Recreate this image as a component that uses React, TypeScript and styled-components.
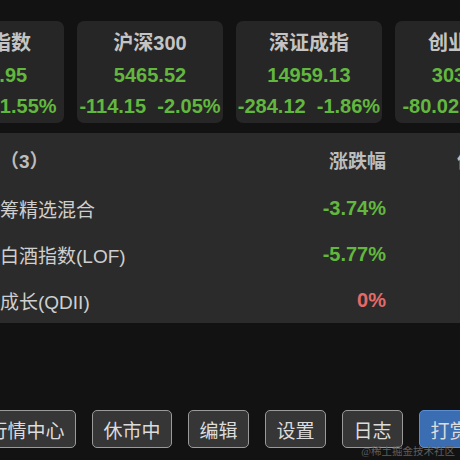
import styled, { createGlobalStyle } from 'styled-components'

const GlobalStyle = createGlobalStyle`
  html, body {
    margin: 0;
    padding: 0;
    background: #121212;
  }
  body {
    font-family: 'Liberation Sans', 'Noto Sans CJK SC', sans-serif;
  }
`

type Index = { name: string; value: string; diff: string; rate: string }

const indexes: Index[] = [
  { name: '上证指数', value: '3049.95', diff: '-48.07', rate: '-1.55%' },
  { name: '沪深300', value: '5465.52', diff: '-114.15', rate: '-2.05%' },
  { name: '深证成指', value: '14959.13', diff: '-284.12', rate: '-1.86%' },
  { name: '创业板指', value: '3030.17', diff: '-80.02', rate: '-2.57%' },
]

type Fund = { name: string; rate: string; up: boolean }

const funds: Fund[] = [
  { name: '汇添富统筹精选混合', rate: '-3.74%', up: false },
  { name: '招商中证白酒指数(LOF)', rate: '-5.77%', up: false },
  { name: '嘉实全球成长(QDII)', rate: '0%', up: true },
]

const buttons = ['行情中心', '休市中', '编辑', '设置', '日志', '打赏']

export default function App() {
  return (
    <>
      <GlobalStyle />
      <$Page>
        <$Cards.row>
          {indexes.map((item) => (
            <$Cards.card key={item.name}>
              <$Cards.title>{item.name}</$Cards.title>
              <$Cards.value>{item.value}</$Cards.value>
              <$Cards.change>{`${item.diff}  ${item.rate}`}</$Cards.change>
            </$Cards.card>
          ))}
        </$Cards.row>

        <$Table.panel>
          <$Table.head>
            <span>自选基金（3）</span>
            <$Table.rateHead>涨跌幅</$Table.rateHead>
            <$Table.extra>估值</$Table.extra>
          </$Table.head>
          {funds.map((fund) => (
            <$Table.row key={fund.name}>
              <$Table.name>{fund.name}</$Table.name>
              <$Table.rate up={fund.up}>{fund.rate}</$Table.rate>
              <$Table.extra />
            </$Table.row>
          ))}
        </$Table.panel>

        <$Bar>
          {buttons.map((label) => (
            <$Button key={label} primary={label == '打赏'}>
              {label}
            </$Button>
          ))}
        </$Bar>

        <$Watermark>@稀土掘金技术社区</$Watermark>
      </$Page>
    </>
  )
}

const $Page = styled.div`
  position: relative;
  width: 460px;
  height: 460px;
  overflow: hidden;
  box-sizing: border-box;
  padding-top: 21px;
  display: flex;
  flex-direction: column;
  background: #121212;
`

const $Cards = {
  row: styled.div`
    display: flex;
    gap: 13px;
    margin-left: -82px;
  `,
  card: styled.div`
    flex: 0 0 146px;
    height: 102px;
    box-sizing: border-box;
    padding-top: 8px;
    display: flex;
    flex-direction: column;
    align-items: center;
    background: #262626;
    border-radius: 7px;
  `,
  title: styled.div`
    line-height: 28px;
    font-size: 20px;
    font-weight: bold;
    color: #c4c4c4;
  `,
  value: styled.div`
    margin-top: 4px;
    line-height: 28px;
    font-size: 20px;
    font-weight: bold;
    color: #62b83e;
  `,
  change: styled.div`
    margin-top: 3px;
    line-height: 28px;
    font-size: 20px;
    font-weight: bold;
    color: #62b83e;
    white-space: pre;
  `,
}

const $Table = {
  panel: styled.div`
    margin-top: 10px;
    margin-left: -88px;
    width: 720px;
    box-sizing: border-box;
    padding-left: 12px;
    background: #2b2b2b;
  `,
  head: styled.div`
    display: grid;
    grid-template-columns: 370px 92px 1fr;
    align-items: center;
    height: 52px;
    font-size: 19px;
    font-weight: bold;
    color: #bdbdbd;
  `,
  rateHead: styled.span`
    text-align: right;
  `,
  row: styled.div`
    display: grid;
    grid-template-columns: 370px 92px 1fr;
    align-items: center;
    height: 46px;
  `,
  name: styled.span`
    font-size: 19px;
    color: #cfcfcf;
    white-space: nowrap;
  `,
  rate: styled.span<{ up: boolean }>`
    text-align: right;
    font-size: 20px;
    font-weight: bold;
    color: ${({ up }) => (up ? '#e46a6a' : '#62b83e')};
  `,
  extra: styled.span`
    padding-left: 71px;
  `,
}

const $Bar = styled.div`
  display: flex;
  gap: 16px;
  margin-top: 87px;
  margin-left: -23px;
`

const $Button = styled.button<{ primary: boolean }>`
  flex: 0 0 auto;
  height: 38px;
  padding: 0 10.5px;
  font-family: 'Liberation Sans', 'Noto Sans CJK SC', sans-serif;
  font-size: 19px;
  color: #dcdcdc;
  background: ${({ primary }) => (primary ? '#3b6db3' : '#363636')};
  border: 1px solid ${({ primary }) => (primary ? '#5a8fd6' : '#9a9a9a')};
  border-radius: 5px;
`

const $Watermark = styled.div`
  position: absolute;
  right: 5px;
  bottom: 2px;
  font-family: 'Liberation Serif', 'Noto Sans CJK SC', serif;
  font-size: 10.5px;
  color: #5e5e5e;
`
